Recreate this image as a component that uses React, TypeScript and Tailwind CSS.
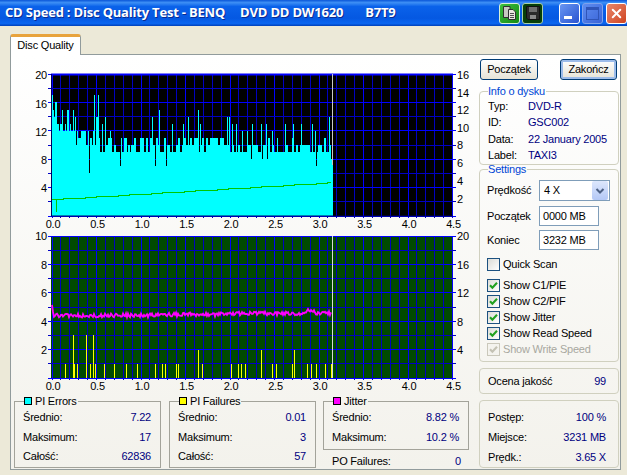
import type { ReactNode } from 'react'
import { X } from 'lucide-react'

// cheap seeded random so the bars stay the same between runs
function makeRandom(seed: number) {
  let s = seed
  return () => {
    s = (s * 1103515245 + 12345) & 0x7fffffff
    return s / 0x7fffffff
  }
}

const BAR_END = 333
const TOP_Y0 = 216
const BOT_Y0 = 378
const UNIT = 7.1

// zoom readings from the reference: [x, value]
const PIE_SPIKES: [number, number][] = [
  [52, 17], [53, 15], [54, 14], [55, 16], [56, 16], [57, 13], [59, 12], [62, 15], [64, 12], [67, 15], [68, 15],
  [70, 13], [73, 15], [75, 14], [77, 12], [80, 11], [84, 12], [88, 12], [89, 6], [93, 12], [94, 17], [96, 14],
  [97, 14], [98, 17], [102, 13], [105, 14], [110, 12], [120, 7], [126, 11], [131, 10], [142, 11], [152, 14],
  [155, 7], [159, 15], [166, 7], [172, 13], [183, 13], [188, 14], [198, 15], [200, 13], [227, 14], [229, 14],
  [232, 13], [236, 13], [242, 12], [247, 12], [252, 13], [251, 8], [261, 13], [262, 8], [266, 13], [267, 8],
  [272, 12], [277, 11], [285, 13], [293, 13], [301, 13], [312, 13], [315, 12], [316, 7], [329, 14],
]

const PIF_BARS: [number, number][] = [
  [65, 1], [73, 3], [74, 1], [77, 1], [86, 3], [90, 1], [93, 3], [95, 1], [104, 1], [114, 1], [126, 1], [137, 1],
  [155, 1], [162, 1], [165, 1], [176, 1], [178, 1], [198, 2], [202, 1], [231, 1], [238, 1], [241, 1], [245, 1],
  [261, 2], [272, 1], [276, 1], [292, 1], [294, 2], [307, 1], [311, 1], [316, 1], [325, 1], [331, 1], [332, 1],
]

function pieFloor(x: number) {
  if (x < 60) return 13
  if (x < 72) return 12
  if (x < 95) return 10
  return 9
}

function piePath() {
  const rnd = makeRandom(71)
  const spikes = new Map(PIE_SPIKES)
  let d = ''
  let level = 10
  for (let x = 52; x < BAR_END; x++) {
    // the samples are about 2px wide, so the top stays blocky
    if (x % 2 === 0) level = pieFloor(x) + Math.floor(rnd() * (x > 220 ? 2.2 : 2.8))
    const v = spikes.get(x) ?? (x >= 331 ? 8 : level)
    d += `M${x + 0.5} ${TOP_Y0}V${TOP_Y0 - v * UNIT}`
  }
  return d
}

function speedPath() {
  let d = 'M52 199'
  for (let x = 52; x <= 331; x += 11) {
    const y = Math.round(199 - ((x - 52) / 279) * 17)
    d += `L${x} ${y}`
    d += `L${x + 11 > 331 ? 331 : x + 11} ${y}`
  }
  return d
}

function jitterPoints() {
  const rnd = makeRandom(23)
  const pts = ['52,305', '53,312']
  for (let x = 54; x <= 331; x += 1) {
    let y = x < 150 ? 315.5 : x < 220 ? 314.5 : 313.5
    if (x > 305 && x < 316) y = 311
    pts.push(`${x},${(y + (rnd() - 0.5) * 4).toFixed(1)}`)
  }
  return pts.join(' ')
}

function Grid({ top, bottom, lines, major }: { top: number; bottom: number; lines: number; major: number }) {
  const step = (bottom - top) / lines
  const vert = Array.from({ length: 46 }, (_, i) => i)
  const hor = Array.from({ length: lines + 1 }, (_, i) => i)
  return (
    <g shapeRendering="crispEdges">
      {vert.map((i) => (
        <line key={i} x1={52 + i * 8.9} x2={52 + i * 8.9} y1={top} y2={bottom + 2} stroke={i % 5 === 0 ? '#0000ff' : '#0000c0'} />
      ))}
      {hor.map((i) => (
        <line key={i} x1={48} x2={456} y1={bottom - i * step} y2={bottom - i * step} stroke={i % major === 0 ? '#0000ff' : '#0000c4'} />
      ))}
    </g>
  )
}

function XLabels({ y }: { y: number }) {
  const labels = ['0.0', '0.5', '1.0', '1.5', '2.0', '2.5', '3.0', '3.5', '4.0', '4.5']
  return (
    <>
      {labels.map((t, i) => (
        <text key={t} x={53 + i * 44.5} y={y} textAnchor="middle">{t}</text>
      ))}
    </>
  )
}

function YLabels({ items, x, anchor }: { items: [string, number][]; x: number; anchor: 'start' | 'end' }) {
  return (
    <>
      {items.map(([t, y]) => (
        <text key={t} x={x} y={y + 4} textAnchor={anchor}>{t}</text>
      ))}
    </>
  )
}

function TopChart() {
  return (
    <svg viewBox="14 66 462 164" className="block h-[164px] w-[462px] shrink-0 fill-black">
      <rect x="51" y="74" width="402" height="142" fill="#000000" />
      <Grid top={74} bottom={216} lines={10} major={2} />
      <path d={piePath()} stroke="#00ffff" fill="none" shapeRendering="crispEdges" />
      <line x1="51" x2="453" y1="74.5" y2="74.5" stroke="#0000ff" strokeWidth="2" />
      <line x1="51.5" x2="51.5" y1="74" y2="216" stroke="#000060" />
      <line x1="51" x2="453" y1="216" y2="216" stroke="#000060" />
      <path d={speedPath()} stroke="#00c800" strokeWidth="1" fill="none" shapeRendering="crispEdges" />
      <path d="M56.5 199V212" stroke="#00c800" strokeWidth="1" fill="none" />
      <line x1="332.5" x2="332.5" y1="74" y2="165" stroke="#c8c8c8" />
      <YLabels x={47} anchor="end" items={[['20', 75], ['16', 104], ['12', 132], ['8', 160], ['4', 188]]} />
      <YLabels x={457} anchor="start" items={[['16', 75], ['14', 93], ['12', 110], ['10', 128], ['8', 145], ['6', 163], ['4', 181], ['2', 199]]} />
      <XLabels y={228} />
    </svg>
  )
}

function BottomChart() {
  return (
    <svg viewBox="14 230 462 164" className="block h-[164px] w-[462px] shrink-0 fill-black">
      <rect x="51" y="236" width="402" height="142" fill="#004a00" />
      <Grid top={236} bottom={378} lines={10} major={2} />
      <g shapeRendering="crispEdges">
        {PIF_BARS.map(([x, v]) => (
          <line key={x} x1={x + 0.5} x2={x + 0.5} y1={BOT_Y0} y2={BOT_Y0 - v * 14.2} stroke="#ffff00" />
        ))}
      </g>
      <polyline points={jitterPoints()} fill="none" stroke="#ff00ff" strokeWidth="1.8" />
      <line x1="332.5" x2="332.5" y1="236" y2="378" stroke="#d8d8d8" />
      <YLabels x={47} anchor="end" items={[['10', 236], ['8', 265], ['6', 293], ['4', 322], ['2', 350]]} />
      <YLabels x={457} anchor="start" items={[['20', 236], ['16', 265], ['12', 293], ['8', 322], ['4', 350]]} />
      <XLabels y={390} />
    </svg>
  )
}

function StatRow({ label, value, className = '' }: { label: string; value: string; className?: string }) {
  return (
    <div className={`flex h-[20px] items-center justify-between ${className}`}>
      <span>{label}</span>
      <span className="text-[#000080]">{value}</span>
    </div>
  )
}

function StatGroup({ title, color, width, height, children }: { title: string; color: string; width: string; height: string; children: ReactNode }) {
  return (
    <fieldset className={`${width} ${height} shrink-0 border border-[#a3a39a] pl-[8px] pr-[9px]`}>
      <legend className="ml-[1px] flex h-[14px] items-center pr-[1px]">
        <span className={`mr-[3px] h-[6px] w-[6px] box-content border border-black ${color}`} />
        <span>{title}</span>
      </legend>
      {children}
    </fieldset>
  )
}

function InfoRow({ label, value }: { label: string; value: string }) {
  return (
    <div className="flex h-[16.3px] items-center">
      <span className="w-[40px]">{label}</span>
      <span className="text-[#000080]">{value}</span>
    </div>
  )
}

function CheckRow({ label, checked = true, disabled = false }: { label: string; checked?: boolean; disabled?: boolean }) {
  return (
    <div className={`flex h-[13px] items-center ${disabled ? 'text-[#a8a8a0]' : ''}`}>
      <span className={`mr-[3px] flex h-[13px] w-[13px] items-center justify-center border ${disabled ? 'border-[#cac8bb] bg-[#f4f3ee]' : 'border-[#1c5180] bg-linear-to-br from-[#dcdcd7] to-white'}`}>
        {checked && (
          <svg viewBox="0 0 11 11" className="h-[11px] w-[11px]">
            <path d="M2 5.2 L4.4 7.8 L9 2.8" fill="none" stroke={disabled ? '#c4c2b4' : '#21a121'} strokeWidth="2.1" />
          </svg>
        )}
      </span>
      <span>{label}</span>
    </div>
  )
}

function TextBox({ value }: { value: string }) {
  return (
    <div className="flex h-[20px] w-[60px] items-center border border-[#7f9db9] bg-white pl-[3px]">{value}</div>
  )
}

function XpButton({ label, isDefault = false, width }: { label: string; isDefault?: boolean; width: string }) {
  return (
    <button className={`h-[21px] ${width} rounded-[3px] border border-[#003c74] bg-linear-to-b from-white to-[#e6e3d6] ${isDefault ? 'shadow-[inset_0_0_0_2px_#9dbcea]' : ''}`}>
      {label}
    </button>
  )
}

function CopyIcon() {
  return (
    <span className="flex h-[21px] w-[21px] items-center justify-center rounded-[3px] border border-[#d8f0d8] bg-linear-to-br from-[#3cc03c] to-[#128a12]">
      <svg viewBox="0 0 16 16" className="h-[16px] w-[16px]">
        <path d="M1.5 1.5H8V12.5H1.5Z" fill="#c8c8c0" stroke="#303030" />
        <path d="M6.5 4.5H11L13.5 7V14.5H6.5Z" fill="#e8e8e0" stroke="#303030" />
        <path d="M8 8.5H12M8 10.5H12M8 12.5H12" stroke="#505050" />
      </svg>
    </span>
  )
}

function SaveIcon() {
  return (
    <span className="flex h-[21px] w-[21px] items-center justify-center rounded-[3px] border border-[#a8d0a8] bg-[#063f08]">
      <svg viewBox="0 0 16 16" className="h-[16px] w-[16px]">
        <path d="M1.5 1.5H14.5V14.5H3L1.5 13Z" fill="#2a2a2a" stroke="#101010" />
        <path d="M4 2H12V7H4Z" fill="#6e6e6e" />
        <path d="M5 10H11V14H5Z" fill="#8a8a8a" />
      </svg>
    </span>
  )
}

export default function App() {
  return (
    <div className="flex h-[475px] w-[627px] flex-col overflow-hidden bg-[#ece9d8] font-['Liberation_Sans',sans-serif] text-[11px] tracking-[-0.2px] text-black">
      {/* title bar */}
      <div className="flex h-[26px] shrink-0 items-center bg-[linear-gradient(180deg,#0a56d8_0%,#3d8ff5_10%,#0a62ea_25%,#0558e2_70%,#0a66f0_90%,#0040b8_100%)] pl-[5px]">
        <span className="flex font-['Open_Sans',sans-serif] text-[13px] font-bold tracking-[-0.2px] text-white [text-shadow:1px_1px_0_#0a2a90]">
          <span>CD Speed : Disc Quality Test - BENQ</span>
          <span className="ml-[15px]">DVD DD DW1620</span>
          <span className="ml-[22px]">B7T9</span>
        </span>
        <div className="ml-auto flex shrink-0 items-center gap-[2px]">
          <CopyIcon />
          <SaveIcon />
        </div>
        <div className="ml-[16px] flex shrink-0 items-center">
          <span className="flex h-[21px] w-[21px] items-end rounded-[3px] border border-white bg-linear-to-br from-[#6a96f2] to-[#2a52d0] pb-[4px] pl-[4px]">
            <span className="h-[3px] w-[8px] bg-white" />
          </span>
          <span className="ml-[2px] flex h-[21px] w-[21px] items-center justify-center rounded-[3px] border border-[#7ea2ec] bg-linear-to-br from-[#5f8df0] to-[#3a64d8]">
            <span className="h-[13px] w-[13px] border border-t-[3px] border-[#2f55b8]" />
          </span>
          <span className="ml-[3px] flex h-[21px] w-[21px] shrink-0 items-center justify-center rounded-[3px] border border-white bg-linear-to-br from-[#e8866a] to-[#d0431c]">
            <X size={15} strokeWidth={3.2} color="white" />
          </span>
        </div>
      </div>

      {/* tabs */}
      <div className="ml-[3px] flex-1 pl-[7px] pt-[8px]">
        <div className="relative z-10 mb-[-1px] flex h-[21px] w-[71px] items-center justify-center rounded-t-[3px] border-x border-[#919b9c] border-t-[3px] border-t-[#e8a33d] bg-white pb-[1px]">
          Disc Quality
        </div>
        <div className="flex h-[416px] w-[611px] border border-[#919b9c] bg-linear-to-b from-white to-[#f3f2ec]">
          {/* charts and stats */}
          <div className="flex w-[465px] shrink-0 flex-col pl-[3px] pt-[11px]">
            <TopChart />
            <BottomChart />
            <div className="flex items-start">
              <StatGroup title="PI Errors" color="bg-[#00ffff]" width="w-[147px]" height="h-[74px]">
                <StatRow label="Średnio:" value="7.22" className="mt-[-1px]" />
                <StatRow label="Maksimum:" value="17" />
                <StatRow label="Całość:" value="62836" className="mt-[-1px]" />
              </StatGroup>
              <div className="ml-[8px]">
                <StatGroup title="PI Failures" color="bg-[#ffff00]" width="w-[147px]" height="h-[74px]">
                  <StatRow label="Średnio:" value="0.01" className="mt-[-1px]" />
                  <StatRow label="Maksimum:" value="3" />
                  <StatRow label="Całość:" value="57" className="mt-[-1px]" />
                </StatGroup>
              </div>
              <div className="ml-[7px] w-[146px]">
                <StatGroup title="Jitter" color="bg-[#ff00ff]" width="w-[146px]" height="h-[56px]">
                  <StatRow label="Średnio:" value="8.82 %" className="mt-[-1px]" />
                  <StatRow label="Maksimum:" value="10.2 %" />
                </StatGroup>
                <StatRow label="PO Failures:" value="0" className="ml-[9px] mr-[8px] mt-[1px]" />
              </div>
            </div>
          </div>

          {/* right column */}
          <div className="ml-[3px] flex w-[140px] shrink-0 flex-col pt-[4px]">
            <div className="ml-[1px] flex justify-between pr-[2px]">
              <XpButton label="Początek" width="w-[58px]" />
              <XpButton label="Zakończ" width="w-[57px]" isDefault />
            </div>

            <fieldset className="mt-[4px] h-[81px] rounded-[4px] border border-[#d0d0bf] pl-[8px]">
              <legend className="h-[14px] pr-[1px] leading-[14px] text-[#0046d5]">Info o dysku</legend>
              <InfoRow label="Typ:" value="DVD-R" />
              <InfoRow label="ID:" value="GSC002" />
              <InfoRow label="Data:" value="22 January 2005" />
              <InfoRow label="Label:" value="TAXI3" />
            </fieldset>

            <fieldset className="mt-[-3px] h-[200px] rounded-[4px] border border-[#d0d0bf] pl-[7px]">
              <legend className="ml-[1px] h-[14px] pr-[1px] leading-[14px] text-[#0046d5]">Settings</legend>
              <div className="mt-[4px] flex h-[21px] items-center">
                <span className="w-[52px]">Prędkość</span>
                <div className="flex h-[21px] w-[71px] items-center justify-between border border-[#7f9db9] bg-white pl-[4px] pr-[1px]">
                  <span>4 X</span>
                  <span className="flex h-[19px] w-[16px] items-center justify-center rounded-[2px] bg-linear-to-b from-[#dde7fc] to-[#b4c8f6]">
                    <svg viewBox="0 0 10 10" className="h-[10px] w-[10px]">
                      <path d="M1.5 3 L5 6.5 L8.5 3" fill="none" stroke="#4d6185" strokeWidth="2" />
                    </svg>
                  </span>
                </div>
              </div>
              <div className="mt-[5px] flex items-center">
                <span className="w-[52px]">Początek</span>
                <TextBox value="0000 MB" />
              </div>
              <div className="mt-[4px] flex items-center">
                <span className="w-[52px]">Koniec</span>
                <TextBox value="3232 MB" />
              </div>
              <div className="mt-[8px]">
                <CheckRow label="Quick Scan" checked={false} />
              </div>
              <div className="mt-[8px] flex flex-col gap-[3px]">
                <CheckRow label="Show C1/PIE" />
                <CheckRow label="Show C2/PIF" />
                <CheckRow label="Show Jitter" />
                <CheckRow label="Show Read Speed" />
                <CheckRow label="Show Write Speed" disabled />
              </div>
            </fieldset>

            <div className="mt-[6px] flex h-[26px] items-center justify-between rounded-[4px] border border-[#d0d0bf] pl-[8px] pr-[12px] pt-[1px]">
              <span>Ocena jakość</span>
              <span className="text-[#000080]">99</span>
            </div>

            <div className="mt-[6px] h-[68px] rounded-[4px] border border-[#d0d0bf] pl-[8px] pr-[12px] pt-[6px]">
              <StatRow label="Postęp:" value="100 %" />
              <StatRow label="Miejsce:" value="3231 MB" />
              <StatRow label="Prędk.:" value="3.65 X" />
            </div>
          </div>
        </div>
      </div>
    </div>
  )
}
